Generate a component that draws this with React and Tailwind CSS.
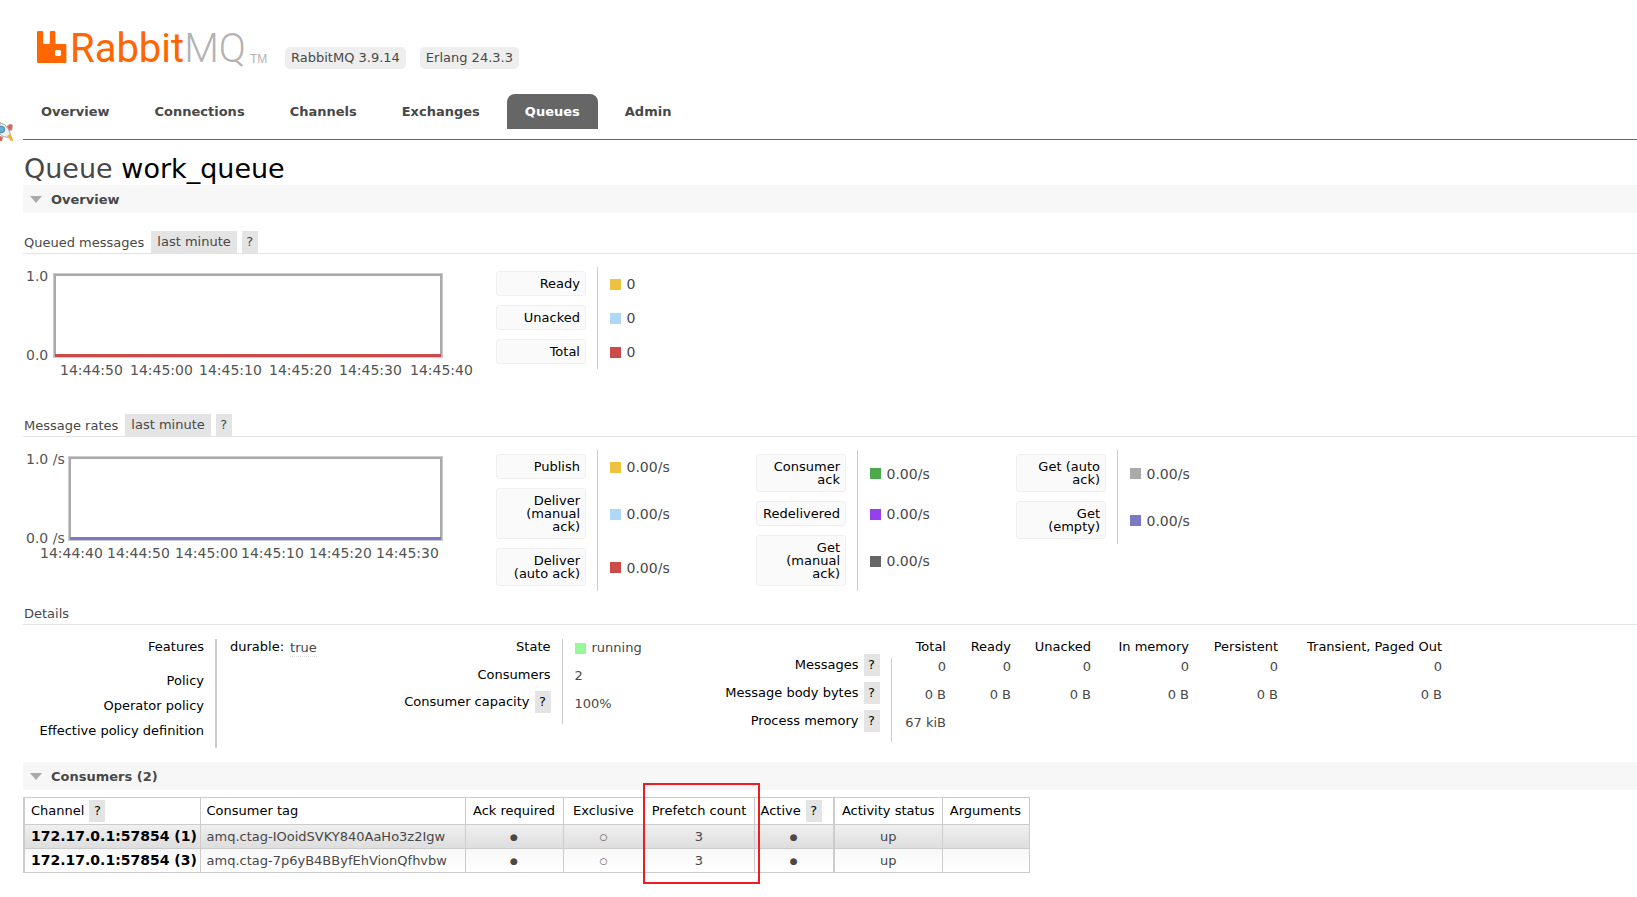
import React from 'react';

const tabs = ['Overview', 'Connections', 'Channels', 'Exchanges', 'Queues', 'Admin'];

const queuedLegend = [
  { label: 'Ready', color: 'bg-[#edc240]', value: '0' },
  { label: 'Unacked', color: 'bg-[#afd8f8]', value: '0' },
  { label: 'Total', color: 'bg-[#cb4b4b]', value: '0' },
];

const rateLegends = [
  [
    { label: 'Publish', color: 'bg-[#edc240]', value: '0.00/s' },
    { label: 'Deliver (manual ack)', color: 'bg-[#afd8f8]', value: '0.00/s' },
    { label: 'Deliver (auto ack)', color: 'bg-[#cb4b4b]', value: '0.00/s' },
  ],
  [
    { label: 'Consumer ack', color: 'bg-[#4da74d]', value: '0.00/s' },
    { label: 'Redelivered', color: 'bg-[#9440ed]', value: '0.00/s' },
    { label: 'Get (manual ack)', color: 'bg-[#666666]', value: '0.00/s' },
  ],
  [
    { label: 'Get (auto ack)', color: 'bg-[#aaaaaa]', value: '0.00/s' },
    { label: 'Get (empty)', color: 'bg-[#7c79c3]', value: '0.00/s' },
  ],
];

const messageColumns = [
  { name: 'Total', width: 'w-[66px]' },
  { name: 'Ready', width: 'w-[65px]' },
  { name: 'Unacked', width: 'w-[80px]' },
  { name: 'In memory', width: 'w-[98px]' },
  { name: 'Persistent', width: 'w-[89px]' },
  { name: 'Transient, Paged Out', width: 'w-[164px]' },
];

const messageRows = [
  { label: 'Messages', values: ['0', '0', '0', '0', '0', '0'] },
  { label: 'Message body bytes', values: ['0 B', '0 B', '0 B', '0 B', '0 B', '0 B'] },
  { label: 'Process memory', values: ['67 kiB', '', '', '', '', ''] },
];

const consumers = [
  { channel: '172.17.0.1:57854 (1)', tag: 'amq.ctag-IOoidSVKY840AaHo3z2Igw' },
  { channel: '172.17.0.1:57854 (3)', tag: 'amq.ctag-7p6yB4BByfEhVionQfhvbw' },
];

const Logo = () => (
  <svg width="236" height="60" viewBox="0 -8 236 60" role="img" aria-label="RabbitMQ">
    <path
      fill="#ff6600"
      fillRule="evenodd"
      d="M1.2 4h3.8q1.2 0 1.2 1.2v10.6q0 1.2 1.2 1.2h4.2q1.2 0 1.2-1.2V5.2q0-1.2 1.2-1.2h3.2q1.2 0 1.2 1.2v10.6q0 1.2 1.2 1.2h8.6q1.2 0 1.2 1.2v16.6q0 1.2-1.2 1.2H1.2Q0 36 0 34.800V5.2Q0 4 1.2 4zM19.5 23q-1.5 0-1.5 1.5v3q0 1.5 1.5 1.5h3q1.5 0 1.5-1.5v-3q0-1.5-1.5-1.5z"
    />
    <text x="33" y="35" fontSize="40" className="font-['Roboto',sans-serif]" fill="#ff6600">
      Rabbit<tspan fill="#b3b3b3" className="font-light">MQ</tspan>
    </text>
    <text x="213" y="36" fontSize="12" className="font-['Liberation_Sans',sans-serif]" fill="#b3b3b3">TM</text>
  </svg>
);

// Rocket handle docked on the left edge of the window
const Rocket = () => (
  <svg className="absolute top-[122px] left-0" width="14" height="20" viewBox="0 0 14 20" aria-hidden="true">
    <path d="M6 5l4-3 2.500 1-.5 5-4 1z" fill="#d9685c" stroke="#b9a5a0" strokeWidth="0.600" />
    <path d="M0 14l3 1-1 4H0z" fill="#d9685c" />
    <path d="M0 0.500Q6 2 8.500 7.500L11 13l-2.500 2.500L3 14.500 0 12z" fill="#eef1f3" stroke="#a9adb0" strokeWidth="1" />
    <circle cx="1.500" cy="7.500" r="3.200" fill="#5fb4d6" stroke="#4a7f99" strokeWidth="1" />
    <path d="M7 14l3.500-2.500 2.500 6.500v1h-2z" fill="#f0b040" />
  </svg>
);

const Help = () => (
  <button type="button" className="inline-block h-[22px] w-4 bg-[#e4e4e4] text-center leading-[22px]">?</button>
);

const SectionBar = ({ title }) => (
  <h2 className="flex h-7 items-center bg-[#f7f7f7] pl-[7px] text-[13px] font-bold">
    <svg width="12" height="7" viewBox="0 0 12 7" className="mr-[9px]" aria-hidden="true">
      <path d="M0 0h12L6 7z" fill="#aaa" />
    </svg>
    <span className="pt-px">{title}</span>
  </h2>
);

const ChartHeading = ({ title }) => (
  <h3 className="flex h-[23px] items-center border-b border-[#e4e4e4] pl-px">
    <span className="mr-[7px] pt-0.5">{title}</span>
    <button type="button" className="mr-[5px] h-[22px] bg-[#e4e4e4] px-1.5">last minute</button>
    <Help />
  </h3>
);

const Chart = ({ left, unit, color, ticks }) => (
  <svg width="473" height="130" viewBox="0 0 473 130" className="shrink-0" fontSize="14" fill="#545454">
    <rect x={left + 1.5} y="20.500" width={417 - left} height="82" fill="none" stroke="#ccc" strokeWidth="3" />
    <rect x={left + 2} y="21" width={416 - left} height="81" fill="none" stroke="#aaa" strokeWidth="2" />
    <path d={`M${left + 2} 101.500H418`} stroke={color} strokeWidth="3" />
    <text x="3" y="27">{`1.0${unit}`}</text>
    <text x="3" y="106">{`0.0${unit}`}</text>
    {ticks.map((tick) => (
      <text key={tick.label} x={tick.x} y="121">{tick.label}</text>
    ))}
  </svg>
);

const Legend = ({ rows }) => (
  <table className="w-[260px] border-collapse">
    <tbody>
      {rows.map((row) => (
        <tr key={row.label}>
          <th className="w-[101px] border-r border-[#ccc] pt-1 pr-2.5 pb-[5px] font-normal text-black">
            <div className="w-[90px] rounded-[3px] border border-[#f0f0f0] bg-[#fafafa] p-[5px] text-right leading-[13px]">
              {row.label}
            </div>
          </th>
          <td className="pl-3">
            <div className="flex items-center gap-1.5 text-sm">
              <span className={`size-[11px] ${row.color}`} />
              {row.value}
            </div>
          </td>
        </tr>
      ))}
    </tbody>
  </table>
);

const queuedTicks = [
  { label: '14:44:50', x: 37 },
  { label: '14:45:00', x: 107 },
  { label: '14:45:10', x: 176 },
  { label: '14:45:20', x: 246 },
  { label: '14:45:30', x: 316 },
  { label: '14:45:40', x: 387 },
];

const rateTicks = [
  { label: '14:44:40', x: 17 },
  { label: '14:44:50', x: 84 },
  { label: '14:45:00', x: 152 },
  { label: '14:45:10', x: 218 },
  { label: '14:45:20', x: 286 },
  { label: '14:45:30', x: 353 },
];

const Details = () => (
  <div className="flex h-[137px] items-start pt-[14px] leading-4">
    <div className="w-[366px]">
      <table className="border-collapse">
        <tbody>
          <tr className="h-[34px] align-top">
            <th className="w-[193px] border-r-2 border-[#ccc] pr-[11px] text-right font-normal text-black">Features</th>
            <td className="pl-[13px]">
              <div className="flex items-start gap-1.5">
                <span className="text-black">durable:</span>
                <abbr className="border-b border-dotted border-[#ddd] pt-px no-underline">true</abbr>
              </div>
            </td>
          </tr>
          {['Policy', 'Operator policy', 'Effective policy definition'].map((label) => (
            <tr key={label} className="h-[25px] align-top">
              <th className="border-r-2 border-[#ccc] pr-[11px] text-right font-normal text-black">{label}</th>
              <td />
            </tr>
          ))}
        </tbody>
      </table>
    </div>

    <div className="w-[322px]">
      <table className="border-collapse">
        <tbody>
          <tr className="h-7 align-top">
            <th className="w-[173px] border-r border-[#ccc] pr-[11px] text-right font-normal text-black">State</th>
            <td className="pl-3">
              <div className="flex items-center gap-1.5 pt-px">
                <span className="size-[11px] bg-[#98f898]" />
                running
              </div>
            </td>
          </tr>
          <tr className="h-7 align-top">
            <th className="border-r border-[#ccc] pr-[11px] text-right font-normal text-black">Consumers</th>
            <td className="pt-px pl-3">2</td>
          </tr>
          <tr className="h-[29px] align-top">
            <th className="border-r border-[#ccc] pr-[11px] font-normal text-black">
              <div className="-mt-1 flex items-center justify-end gap-[5px]">Consumer capacity <Help /></div>
            </th>
            <td className="pt-px pl-3">100%</td>
          </tr>
        </tbody>
      </table>
    </div>

    <table className="border-collapse text-right">
      <thead>
        <tr className="h-[19px] align-top">
          <th className="w-[180px]" />
          {messageColumns.map((column) => (
            <th key={column.name} className={`pr-[11px] text-right font-normal whitespace-nowrap text-black ${column.width}`}>
              {column.name}
            </th>
          ))}
        </tr>
      </thead>
      <tbody>
        {messageRows.map((row) => (
          <tr key={row.label} className="h-7 align-top">
            <th className="border-r border-[#ccc] pr-[11px] font-normal text-black">
              <div className="-mt-1 flex items-center justify-end gap-[5px]">{row.label} <Help /></div>
            </th>
            {row.values.map((value, i) => (
              <td key={messageColumns[i].name} className="pt-px pr-[11px] whitespace-nowrap">{value}</td>
            ))}
          </tr>
        ))}
      </tbody>
    </table>
  </div>
);

const Consumers = () => (
  <div className="relative mt-[7px] w-fit">
    <table className="table-fixed border-collapse border border-l-2 border-[#ccc] text-center">
      <thead>
        <tr className="h-[27px] text-black [&>th]:border [&>th]:border-[#ccc] [&>th]:font-normal">
          <th className="w-[176px] pl-1.5 text-left">
            <div className="flex items-center gap-[5px]">Channel <Help /></div>
          </th>
          <th className="w-[265px] pl-1.5 text-left">Consumer tag</th>
          <th className="w-[98px]">Ack required</th>
          <th className="w-[81px]">Exclusive</th>
          <th className="w-[110px]">Prefetch count</th>
          <th className="w-[80px] pl-1.5">
            <div className="flex items-center gap-[5px]">Active <Help /></div>
          </th>
          <th className="w-[108px] border-l-2!">Activity status</th>
          <th className="w-[87px]">Arguments</th>
        </tr>
      </thead>
      <tbody>
        {consumers.map((consumer) => (
          <tr
            key={consumer.channel}
            className="h-6 bg-linear-to-b whitespace-nowrap odd:from-[#f0f0f0] odd:to-[#dddddd] even:from-[#f8f8f8] even:to-white [&>td]:border [&>td]:border-[#ccc]"
          >
            <td className="pl-1.5 text-left">
              <a href="#channel" className="text-sm font-bold text-black">{consumer.channel}</a>
            </td>
            <td className="pl-1.5 text-left">{consumer.tag}</td>
            <td className="text-[9px]">●</td>
            <td className="text-[9px]">○</td>
            <td>3</td>
            <td className="text-[9px]">●</td>
            <td className="border-l-2!">up</td>
            <td />
          </tr>
        ))}
      </tbody>
    </table>
    {/* Highlight around the prefetch column */}
    <div className="absolute -top-[14px] left-[620px] h-[101px] w-[117px] border-2 border-[#ed1c24]" />
  </div>
);

const App = () => {
  return (
    <div className="relative min-h-screen bg-white pl-[23px] font-['DejaVu_Sans',sans-serif] text-[13px] leading-5 text-[#484848]">
      <Rocket />
      <header className="flex h-[94px] items-start pt-[19px] pl-[14px]">
        <a href="#home"><Logo /></a>
        <ul className="mt-7 ml-3 flex gap-[14px]">
          <li className="h-[22px] rounded-[5px] bg-[#eeeeee] px-1.5 leading-[22px]">RabbitMQ 3.9.14</li>
          <li className="h-[22px] rounded-[5px] bg-[#eeeeee] px-1.5 leading-[22px]">Erlang 24.3.3</li>
        </ul>
      </header>

      <nav className="flex gap-[9px] border-b border-[#666] pb-[10px]">
        {tabs.map((tab) => (
          <a
            key={tab}
            href={`#${tab.toLowerCase()}`}
            className={`rounded-t-lg px-[18px] font-bold leading-[35px] ${tab === 'Queues' ? 'bg-[#666] text-white' : ''}`}
          >
            {tab}
          </a>
        ))}
      </nav>

      <main>
        <h1 className="pt-[13px] pl-px text-[27px] leading-8">
          Queue <b className="font-normal text-black">work_queue</b>
        </h1>
        <SectionBar title="Overview" />

        <div className="pt-[18px]">
          <ChartHeading title="Queued messages" />
          <div className="flex h-40 items-start">
            <Chart left={30} unit="" color="#cb4b4b" ticks={queuedTicks} />
            <div className="pt-[13px]"><Legend rows={queuedLegend} /></div>
          </div>

          <ChartHeading title="Message rates" />
          <div className="flex h-[165px] items-start">
            <Chart left={45} unit=" /s" color="#7c79c3" ticks={rateTicks} />
            <div className="flex items-start pt-[13px]">
              {rateLegends.map((rows) => (
                <Legend key={rows[0].label} rows={rows} />
              ))}
            </div>
          </div>

          <h3 className="flex h-[23px] items-center border-b border-[#e4e4e4] pt-0.5 pl-px">Details</h3>
          <Details />
        </div>

        <SectionBar title="Consumers (2)" />
        <Consumers />
      </main>
    </div>
  );
};

export default App;
